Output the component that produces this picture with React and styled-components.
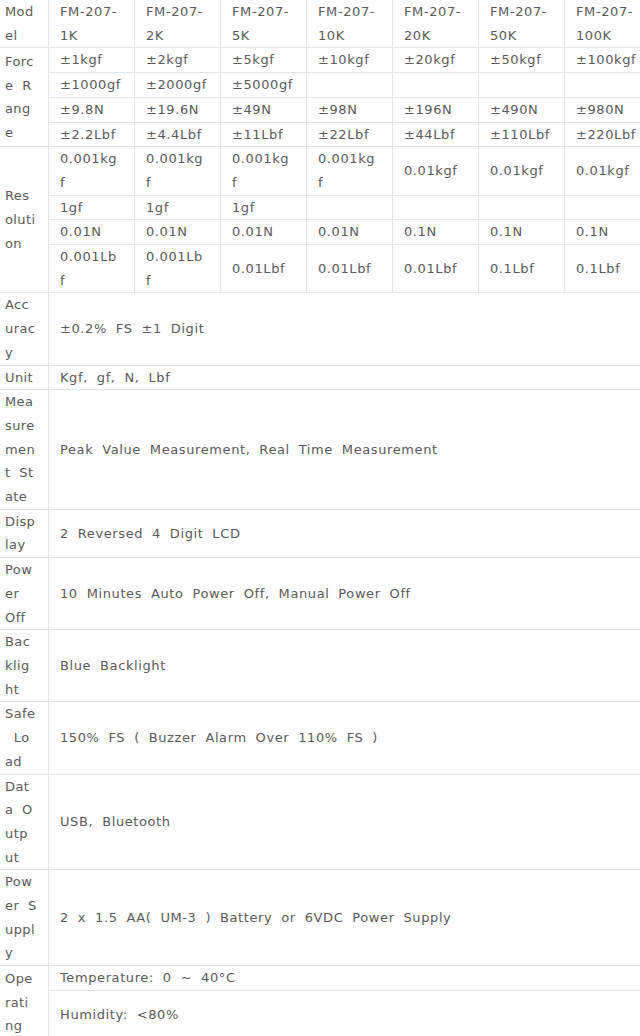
import React from "react";
import styled, { createGlobalStyle } from "styled-components";

const GlobalStyle = createGlobalStyle`
  html, body {
    margin: 0;
    padding: 0;
    background: #ffffff;
    overflow: hidden;
  }
`;

const Page = styled.div`
  width: 640px;
  height: 1036px;
  overflow: hidden;
  font-family: "DejaVu Sans", Verdana, sans-serif;
  font-size: 13px;
  letter-spacing: 0.6px;
  word-spacing: 4.2px;
  color: #5a5a5a;
`;

const Table = styled.table`
  border-collapse: collapse;
  table-layout: fixed;
  width: 651px;
  margin: -1px 0 0 -1px;
`;

const Label = styled.th`
  width: 44px;
  padding: 0 0 0 5px;
  text-align: left;
  font-weight: normal;
  line-height: 23.7px;
  vertical-align: middle;
  border: 1px solid #e0e5e9;
  white-space: nowrap;
  letter-spacing: 0.4px;
`;

const Cell = styled.td`
  padding: 0 11px;
  text-align: left;
  line-height: 23.7px;
  vertical-align: middle;
  border: 1px solid #e0e5e9;
  white-space: nowrap;
  height: ${(p) => (p.$tall ? "48px" : "auto")};
`;

const lines = (v) =>
  Array.isArray(v)
    ? v.map((t, i) => (
        <React.Fragment key={i}>
          {i > 0 && <br />}
          {t}
        </React.Fragment>
      ))
    : v;

const models = ["1K", "2K", "5K", "10K", "20K", "50K", "100K"].map((m) => ["FM-207-", m]);

const force = [
  ["±1kgf", "±2kgf", "±5kgf", "±10kgf", "±20kgf", "±50kgf", "±100kgf"],
  ["±1000gf", "±2000gf", "±5000gf", "", "", "", ""],
  ["±9.8N", "±19.6N", "±49N", "±98N", "±196N", "±490N", "±980N"],
  ["±2.2Lbf", "±4.4Lbf", "±11Lbf", "±22Lbf", "±44Lbf", "±110Lbf", "±220Lbf"],
];

const kg = ["0.001kg", "f"];
const lb = ["0.001Lb", "f"];
const resolution = [
  [kg, kg, kg, kg, "0.01kgf", "0.01kgf", "0.01kgf"],
  ["1gf", "1gf", "1gf", "", "", "", ""],
  ["0.01N", "0.01N", "0.01N", "0.01N", "0.1N", "0.1N", "0.1N"],
  [lb, lb, "0.01Lbf", "0.01Lbf", "0.01Lbf", "0.1Lbf", "0.1Lbf"],
];

const specs = [
  { label: ["Acc", "urac", "y"], value: "±0.2% FS ±1 Digit" },
  { label: ["Unit"], value: "Kgf, gf, N, Lbf" },
  {
    label: ["Mea", "sure", "men", "t St", "ate"],
    value: "Peak Value Measurement, Real Time Measurement",
  },
  { label: ["Disp", "lay"], value: "2 Reversed 4 Digit LCD" },
  { label: ["Pow", "er", "Off"], value: "10 Minutes Auto Power Off, Manual Power Off" },
  { label: ["Bac", "klig", "ht"], value: "Blue Backlight" },
  { label: ["Safe", "\u00a0Lo", "ad"], value: "150% FS ( Buzzer Alarm Over 110% FS )" },
  { label: ["Dat", "a O", "utp", "ut"], value: "USB, Bluetooth" },
  {
    label: ["Pow", "er S", "uppl", "y"],
    value: "2 x 1.5 AA( UM-3 ) Battery or 6VDC Power Supply",
  },
];

function Group({ label, rows }) {
  return rows.map((row, r) => (
    <tr key={r}>
      {r === 0 && <Label rowSpan={rows.length}>{lines(label)}</Label>}
      {row.map((v, c) => (
        <Cell key={c}>{lines(v)}</Cell>
      ))}
    </tr>
  ));
}

export default function App() {
  return (
    <Page>
      <GlobalStyle />
      <Table>
        <colgroup>
          <col style={{ width: 49 }} />
          {models.map((m, i) => (
            <col key={i} style={{ width: 86 }} />
          ))}
        </colgroup>
        <tbody>
          <tr>
            <Label>{lines(["Mod", "el"])}</Label>
            {models.map((m, i) => (
              <Cell key={i}>{lines(m)}</Cell>
            ))}
          </tr>
          <Group label={["Forc", "e R", "ang", "e"]} rows={force} />
          <Group label={["Res", "oluti", "on"]} rows={resolution} />
          {specs.map((s, i) => (
            <tr key={i}>
              <Label>{lines(s.label)}</Label>
              <Cell colSpan={7}>{s.value}</Cell>
            </tr>
          ))}
          <tr>
            <Label rowSpan={2}>{lines(["Ope", "rati", "ng"])}</Label>
            <Cell colSpan={7}>Temperature: 0 ~ 40°C</Cell>
          </tr>
          <tr>
            <Cell colSpan={7} $tall>
              Humidity: &lt;80%
            </Cell>
          </tr>
        </tbody>
      </Table>
    </Page>
  );
}
